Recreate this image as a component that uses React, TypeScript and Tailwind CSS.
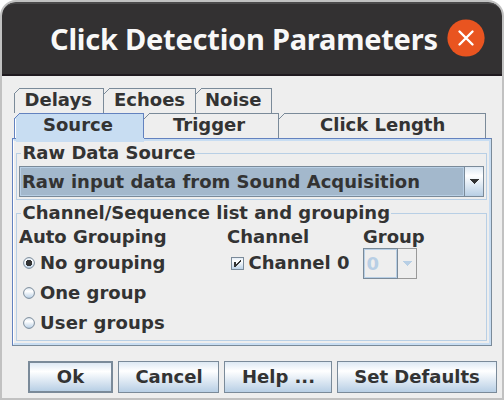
import React from "react";

function Label({ children, className = "" }: { children: React.ReactNode; className?: string }) {
  return <span className={`block h-[21px] whitespace-nowrap leading-[21px] ${className}`}>{children}</span>;
}

function Tab({ label, width, pad, first = false, selected = false }: { label: string; width: string; pad: string; first?: boolean; selected?: boolean }) {
  const stroke = selected ? "#6382bf" : "#7a8a99";
  return (
    <div className={`relative h-[25px] shrink-0 border-t border-r ${selected ? "border-[#6382bf] bg-[#c8ddf2]" : "border-[#7a8a99]"} ${width} ${pad}`}>
      {first && <i className={`absolute bottom-0 left-0 top-[5px] w-px ${selected ? "bg-[#6382bf]" : "bg-[#7a8a99]"}`} />}
      {selected && <i className="absolute bottom-0 left-px top-[5px] w-px bg-white" />}
      <svg className="absolute -top-px left-0" width="6" height="6" shapeRendering="crispEdges">
        <path d="M0 0H6L0 6Z" fill="#eeeeee" />
        <path d="M0 5h1v1H0zM1 4h1v1H1zM2 3h1v1H2zM3 2h1v1H3zM4 1h1v1H4zM5 0h1v1H5z" fill={stroke} />
      </svg>
      <Label>{label}</Label>
    </div>
  );
}

function Radio({ label, checked = false, track = "" }: { label: string; checked?: boolean; track?: string }) {
  return (
    <div className="flex h-[30px] items-start">
      <svg className="mt-[5px] mr-[5px] shrink-0" width="12" height="12">
        <defs>
          <linearGradient id="radioFill" x1="0" y1="0" x2="0" y2="1">
            <stop offset="0" stopColor="#dde8f3" />
            <stop offset=".35" stopColor="#ffffff" />
            <stop offset="1" stopColor="#b8cfe5" />
          </linearGradient>
        </defs>
        <circle cx="6" cy="6" r="5.4" fill="url(#radioFill)" stroke="#7a8a99" />
        {checked && <path d="M4 3h4v1h1v4H8v1H4V8H3V4h1z" fill="#333333" shapeRendering="crispEdges" />}
      </svg>
      <Label className={track}>{label}</Label>
    </div>
  );
}

function Button({ label, width, strong = false, nudge = "" }: { label: string; width: string; strong?: boolean; nudge?: string }) {
  return (
    <button className={`flex h-8 shrink-0 justify-center bg-linear-to-b from-[#dde8f3] via-white via-30% to-[#b8cfe5] ${strong ? "border-2 pt-[3px]" : "border pt-[4px]"} border-[#7a8a99] ${width} ${nudge}`}>
      <Label>{label}</Label>
    </button>
  );
}

export default function App() {
  return (
    <div className="h-[400px] w-[504px] overflow-hidden bg-white font-['DejaVu_Sans',sans-serif] text-[18px] font-bold text-[#333333]">
      <div className="flex h-full flex-col overflow-hidden rounded-t-[16px] border-2 border-[#c1c1c1] bg-[#eeeeee]">
        <header className="flex h-[74px] shrink-0 items-start rounded-t-[13px] border-t-2 border-b-2 border-t-[#4b4a4b] border-b-[#1f1a1f] bg-[#333132] pl-[48px]">
          <h1 className="mt-[15px] w-[397px] whitespace-nowrap font-['Noto_Sans',sans-serif] text-[29px] leading-[40px] font-bold tracking-[-0.23px] text-[#f8f8f8]">Click Detection Parameters</h1>
          <svg className="mt-[15px] shrink-0" width="38" height="38">
            <circle cx="19" cy="19" r="18.6" fill="#e95420" />
            <path d="M12.5 12.5 25.5 25.5M25.5 12.5 12.5 25.5" stroke="#fff" strokeWidth="2.4" strokeLinecap="round" />
          </svg>
        </header>
        <main className="flex flex-col pt-3">
          <nav className="ml-3 flex">
            <Tab label="Delays" width="w-[90px]" pad="pl-[10.5px]" first />
            <Tab label="Echoes" width="w-[92px]" pad="pl-[10px]" />
            <Tab label="Noise" width="w-[76px]" pad="pl-[9px]" />
          </nav>
          <nav className="ml-3 flex">
            <Tab label="Source" width="w-[130px]" pad="pl-[29px]" first selected />
            <Tab label="Trigger" width="w-[135px]" pad="pl-[29px]" />
            <Tab label="Click Length" width="w-[207px]" pad="pl-[41px]" />
          </nav>
          <section className="relative ml-[10px] h-[208px] w-[480px] border border-[#6382bf] border-r-[#7a8a99] border-b-[#7a8a99]">
            <div className="h-full border-2 border-l border-[#c8ddf2] border-l-white pt-[2px] pl-[2px]">
              <i className="absolute -top-px left-[3px] h-[4px] w-[128px] bg-[#c8ddf2]" />
              <fieldset className="relative mt-[10px] h-[47px] w-[471px] border border-[#b8cfe5] pt-[12px] pl-[2px]">
                <legend className="absolute -top-[12px] left-[3.5px] bg-[#eeeeee] pl-[2px]"><Label>Raw Data Source</Label></legend>
                <div className="flex h-[31px] w-[465px] border border-[#7a8a99]">
                  <div className="w-[444px] border border-[#b8cfe5] bg-[#a3b8cc] pt-[3px] pl-px"><Label>Raw input data from Sound Acquisition</Label></div>
                  <div className="flex flex-1 items-center justify-center border-l border-[#7a8a99] bg-linear-to-b from-[#dde8f3] via-white via-30% to-[#b8cfe5]">
                    <svg width="10" height="6" shapeRendering="crispEdges"><path d="M0 0H10L5 5Z" fill="#333" /></svg>
                  </div>
                </div>
              </fieldset>
              <fieldset className="relative mt-[13px] h-[128px] w-[471px] border border-[#b8cfe5] pt-[12px] pl-[2px]">
                <legend className="absolute -top-[12px] left-[3.5px] bg-[#eeeeee] pr-px pl-[2px]"><Label>Channel/Sequence list and grouping</Label></legend>
                <div className="flex">
                  <div className="w-[208px]">
                    <Label>Auto Grouping</Label>
                    <div className="mt-[5px] pl-1">
                      <Radio label="No grouping" checked />
                      <Radio label="One group" />
                      <Radio label="User groups" track="tracking-[0.15px]" />
                    </div>
                  </div>
                  <div className="w-[136px]">
                    <Label>Channel</Label>
                    <div className="mt-[5px] flex items-start pl-1">
                      <svg className="mt-[5px] mr-[4.5px]" width="13" height="13" shapeRendering="crispEdges">
                        <defs><linearGradient id="boxFill" x1="0" y1="0" x2="0" y2="1"><stop offset="0" stopColor="#dde8f3" /><stop offset=".3" stopColor="#fff" /><stop offset="1" stopColor="#b8cfe5" /></linearGradient></defs>
                        <rect x=".5" y=".5" width="12" height="12" fill="url(#boxFill)" stroke="#7a8a99" />
                        <path d="M3 5h2v5H3zM5 7h1v2H5zM6 6h1v2H6zM7 5h1v2H7zM8 4h1v2H8zM9 3h1v2H9z" fill="#333" />
                      </svg>
                      <Label>Channel 0</Label>
                    </div>
                  </div>
                  <div>
                    <Label>Group</Label>
                    <div className="mt-px flex h-[31px] w-[54px]">
                      <div className="w-[35px] border border-[#7a8a99] text-[#b8cfe5]"><div className="h-full border border-[#b8cfe5] pt-[3px] pl-[1.5px]"><Label>0</Label></div></div>
                      <div className="flex flex-1 items-center justify-center border border-l-0 border-[#999999]">
                        <svg width="10" height="6" shapeRendering="crispEdges"><path d="M0 0H10L5 5Z" fill="#b8cfe5" /></svg>
                      </div>
                    </div>
                  </div>
                </div>
              </fieldset>
            </div>
          </section>
        </main>
        <footer className="mt-[15px] ml-[26px] flex gap-[5px]">
          <Button label="Ok" width="w-[85px]" strong />
          <Button label="Cancel" width="w-[101px]" nudge="pl-[1px]" />
          <Button label="Help ..." width="w-[108px]" nudge="pl-[1px]" />
          <Button label="Set Defaults" width="w-[160px]" />
        </footer>
      </div>
    </div>
  );
}
